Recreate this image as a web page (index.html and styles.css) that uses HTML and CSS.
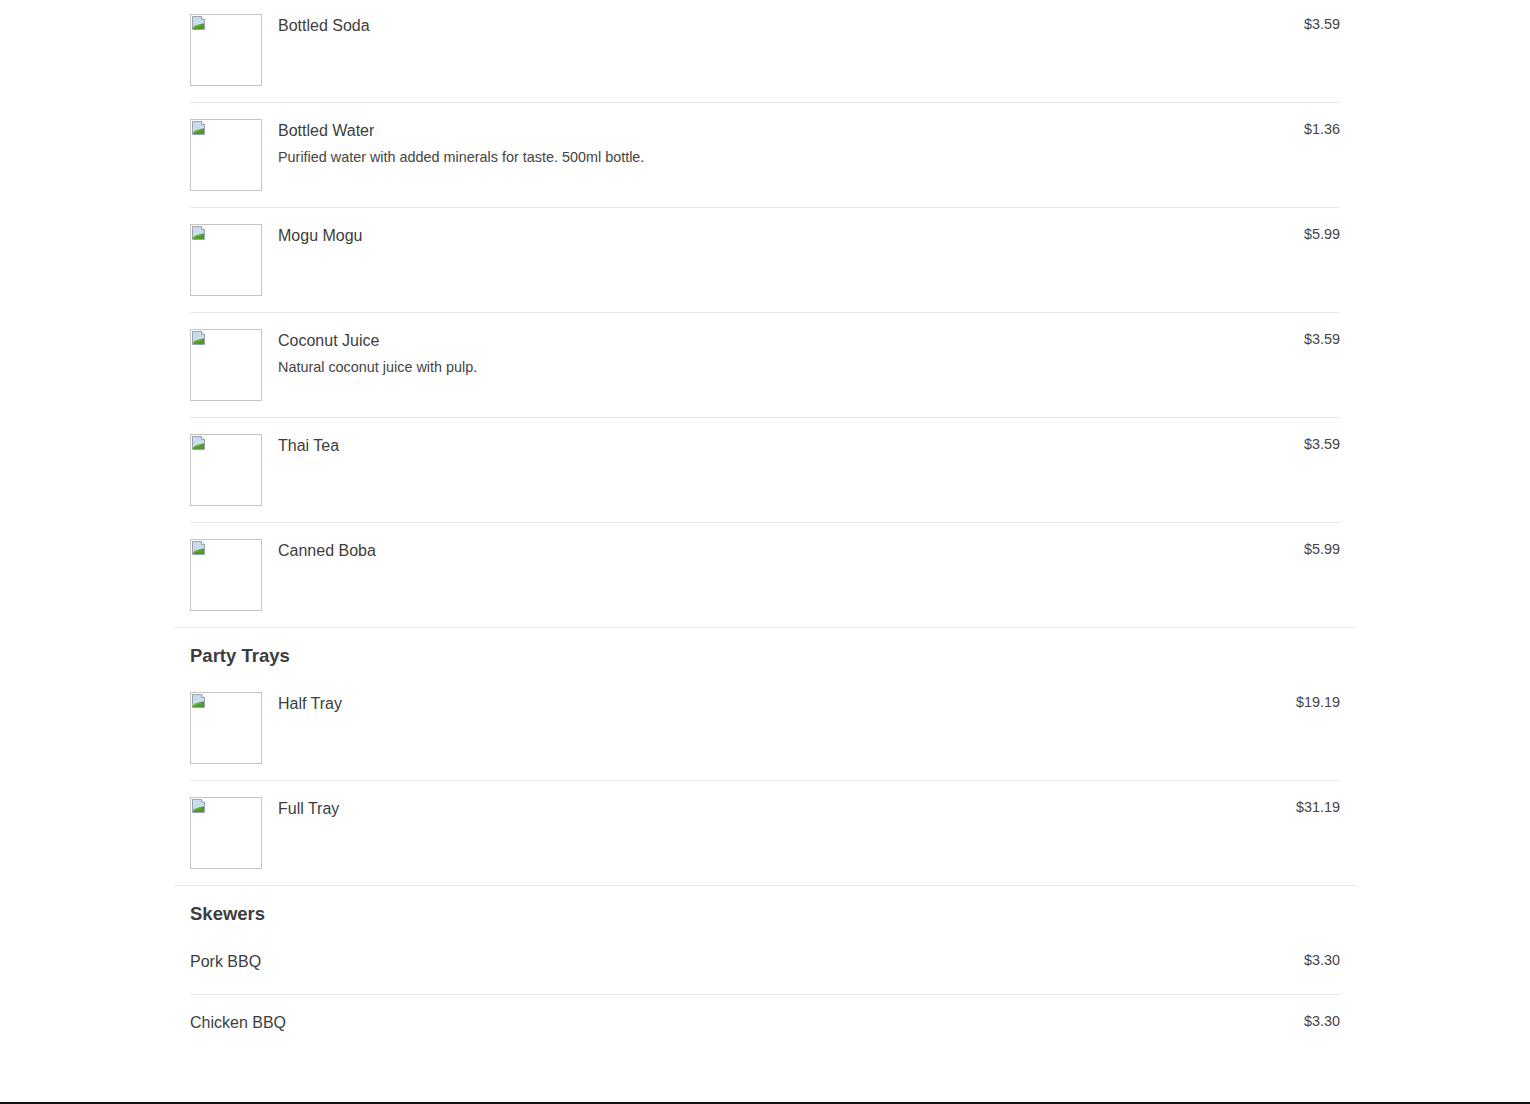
FILE: index.html
```html
<!DOCTYPE html>
<html lang="en">
<head>
<meta charset="utf-8">
<title>Menu</title>
<link rel="stylesheet" href="styles.css">
</head>
<body>
<svg width="0" height="0" class="defs" aria-hidden="true">
  <defs>
    <symbol id="broken" viewBox="0 0 16 16">
      <path d="M1.5 1.5h9l3 3v10h-12z" fill="#dfe9f3" stroke="#9aa3ad" stroke-width="1"/>
      <path d="M2 2h8.4v3H13v2.5C9 8 5 9.5 2 12z" fill="#c9dcee"/>
      <path d="M2 14V12.2C5.5 9.8 9.5 8.6 13 8.3V14z" fill="#4f9a2a"/>
      <path d="M2 14V13C5 11.2 8 10.2 10.5 10" fill="none" stroke="#7cc24a" stroke-width="0.8"/>
      <path d="M10.5 1.5v3h3" fill="#fff" stroke="#9aa3ad" stroke-width="1"/>
    </symbol>
  </defs>
</svg>
<main class="menu">
  <section class="cat">
    <div class="item">
      <div class="thumb"><svg class="bi"><use href="#broken"/></svg></div>
      <div class="info"><div class="name">Bottled Soda</div></div>
      <div class="price">$3.59</div>
    </div>
    <div class="item">
      <div class="thumb"><svg class="bi"><use href="#broken"/></svg></div>
      <div class="info"><div class="name">Bottled Water</div><p class="desc">Purified water with added minerals for taste. 500ml bottle.</p></div>
      <div class="price">$1.36</div>
    </div>
    <div class="item">
      <div class="thumb"><svg class="bi"><use href="#broken"/></svg></div>
      <div class="info"><div class="name">Mogu Mogu</div></div>
      <div class="price">$5.99</div>
    </div>
    <div class="item">
      <div class="thumb"><svg class="bi"><use href="#broken"/></svg></div>
      <div class="info"><div class="name">Coconut Juice</div><p class="desc">Natural coconut juice with pulp.</p></div>
      <div class="price">$3.59</div>
    </div>
    <div class="item">
      <div class="thumb"><svg class="bi"><use href="#broken"/></svg></div>
      <div class="info"><div class="name">Thai Tea</div></div>
      <div class="price">$3.59</div>
    </div>
    <div class="item">
      <div class="thumb"><svg class="bi"><use href="#broken"/></svg></div>
      <div class="info"><div class="name">Canned Boba</div></div>
      <div class="price">$5.99</div>
    </div>
  </section>
  <section class="cat">
    <h3 class="cat-title">Party Trays</h3>
    <div class="item">
      <div class="thumb"><svg class="bi"><use href="#broken"/></svg></div>
      <div class="info"><div class="name">Half Tray</div></div>
      <div class="price">$19.19</div>
    </div>
    <div class="item">
      <div class="thumb"><svg class="bi"><use href="#broken"/></svg></div>
      <div class="info"><div class="name">Full Tray</div></div>
      <div class="price">$31.19</div>
    </div>
  </section>
  <section class="cat last">
    <h3 class="cat-title">Skewers</h3>
    <div class="item plain">
      <div class="info"><div class="name">Pork BBQ</div></div>
      <div class="price">$3.30</div>
    </div>
    <div class="item plain">
      <div class="info"><div class="name">Chicken BBQ</div></div>
      <div class="price">$3.30</div>
    </div>
  </section>
</main>
<footer class="footer"></footer>
</body>
</html>
```

FILE: styles.css
```css
html, body {
  margin: 0;
  padding: 0;
  background: #fff;
}
body {
  font-family: "Liberation Sans", Arial, sans-serif;
  color: #444;
  overflow: hidden;
}
.defs {
  position: absolute;
  width: 0;
  height: 0;
}
.menu {
  width: 1182px;
  margin: -2px auto 0;
  padding-bottom: 47px;
}
.cat {
  padding: 16px 16px 0;
  border-bottom: 1px solid #e8e8e8;
}
.cat:first-child {
  padding-top: 0;
}
.cat.last {
  border-bottom: none;
}
.cat-title {
  margin: 1px 0 9px;
  font-size: 18.5px;
  line-height: 22px;
  font-weight: bold;
  color: #3d3d3d;
}
.item {
  display: flex;
  align-items: flex-start;
  gap: 16px;
  padding: 16px 0;
  border-bottom: 1px solid #e8e8e8;
}
.item:last-child {
  border-bottom: none;
}
.item.plain .info {
  min-height: 28px;
}
.thumb {
  width: 72px;
  height: 72px;
  box-sizing: border-box;
  border: 1px solid #c4c4c4;
  flex: none;
  position: relative;
}
.bi {
  position: absolute;
  left: 0;
  top: 0;
  width: 16px;
  height: 16px;
}
.info {
  flex: 1;
  min-width: 0;
}
.name {
  font-size: 16px;
  line-height: 24px;
  color: #3d3d3d;
}
.desc {
  margin: 4px 0 0;
  font-size: 14.4px;
  line-height: 20px;
  color: #444;
}
.price {
  font-size: 14.4px;
  line-height: 21px;
  color: #444;
  flex: none;
}
.footer {
  height: 60px;
  background: #111;
}
```
